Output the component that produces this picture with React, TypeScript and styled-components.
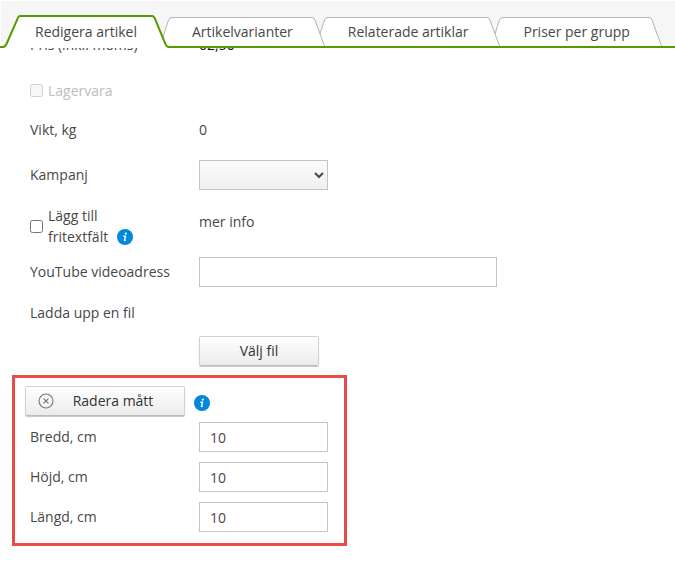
import React, { useState } from "react";
import styled, { createGlobalStyle, css } from "styled-components";

const GREEN = "#569a04";
const LINE = "#c4c4c4";
const TEXT = "#484848";

const GlobalStyle = createGlobalStyle`
  *, *::before, *::after { box-sizing: border-box; }
  body {
    margin: 0;
    background: #fff;
    color: ${TEXT};
    font: 14px/21px "Open Sans", "Noto Sans", sans-serif;
  }
  button, input, select { font: inherit; color: inherit; }
`;

const TabBar = styled.div`
  display: flex;
  align-items: flex-end;
  height: 48px;
  border-top: 1px solid #fff;
  border-left: 1px solid #fff;
  border-bottom: 2px solid ${GREEN};
  background: #f6f6f6;
`;

const TabButton = styled.button<{ $active: boolean; $order: number }>`
  display: flex;
  flex: none;
  align-items: flex-end;
  margin: 0 0 0 -9px;
  padding: 0;
  border: 0;
  background: none;
  white-space: nowrap;
  cursor: pointer;
  position: relative;
  z-index: ${(p) => (p.$active ? 10 : p.$order)};
  ${(p) =>
    p.$active &&
    css`
      margin-bottom: -2px;
    `}
  &:first-child {
    margin-left: -1px;
  }
`;

const TabLabel = styled.span<{ $active: boolean }>`
  display: block;
  height: ${(p) => (p.$active ? 33 : 29)}px;
  padding: ${(p) => (p.$active ? "4px 15px 0" : "3px 19px 0 20px")};
  border-top: ${(p) => (p.$active ? `2px solid ${GREEN}` : "1px solid #b3b3b3")};
  background: #fff;
`;

const TabEdge = styled.svg`
  display: block;
  flex: none;
`;

const Panel = styled.main`
  overflow: hidden;
`;

const Form = styled.form`
  margin-top: -28px;
  padding: 0 12px 30px;
`;

const Row = styled.div<{ $size?: "normal" | "tall" | "taller" | "compact" }>`
  display: grid;
  grid-template-columns: 169px minmax(0, 1fr);
  align-items: center;
  min-height: ${(p) => ({ normal: 40, tall: 50, taller: 52, compact: 30 })[p.$size ?? "normal"]}px;
  padding-left: 18px;
`;

const Caption = styled.span`
  padding-bottom: 2px;
`;

const CheckLabel = styled.label<{ $disabled?: boolean }>`
  display: flex;
  align-items: center;
  gap: 5px;
  color: ${(p) => (p.$disabled ? "#bdbdbd" : "inherit")};
`;

const CheckBox = styled.input`
  flex: none;
  width: 13px;
  height: 13px;
  margin: 0;
`;

const CheckText = styled.span`
  width: 90px;
`;

const Price = styled(Caption)`
  color: #111;
`;

const MoreInfo = styled.span`
  padding-bottom: 10px;
`;

const DropDown = styled.select`
  width: 129px;
  height: 30px;
  padding: 0 0 0 6px;
  border: 1px solid ${LINE};
  border-radius: 0;
  background: linear-gradient(#fbfbfb, #f0f0f0);
`;

const TextBox = styled.input<{ $wide?: boolean }>`
  width: ${(p) => (p.$wide ? 298 : 129)}px;
  max-width: 100%;
  height: 30px;
  padding: 0 10px;
  border: 1px solid ${LINE};
  border-radius: 0;
  background: #fff;
`;

const PushButton = styled.button<{ $wide?: boolean }>`
  display: flex;
  align-items: center;
  justify-content: center;
  width: ${(p) => (p.$wide ? 160 : 120)}px;
  height: 30px;
  padding: 0;
  border: 1px solid #d2d2d2;
  border-bottom-color: #bcbcbc;
  border-radius: 2px;
  background: linear-gradient(#fff, #ebebeb);
  box-shadow: 0 1px 1px #c6c6c6;
  color: #333;
  cursor: pointer;
`;

const ButtonText = styled.span`
  padding: 0 19px 2px;
`;

const Upload = styled.div`
  display: flex;
  margin: 4px 0 9px 187px;
`;

const Measures = styled.section`
  width: 335px;
  max-width: 100%;
  padding: 8px 10px 11px;
  border: 3px solid #e94b47;
`;

const MeasureHead = styled.div`
  display: flex;
  align-items: center;
  gap: 9px;
  margin-bottom: 6px;
`;

const MeasureRows = styled.div`
  display: grid;
  gap: 10px;
  margin-left: -13px;
`;

const InfoLink = styled.button`
  display: inline-flex;
  padding: 0;
  border: 0;
  background: none;
  vertical-align: -3px;
  cursor: pointer;
`;

const LabelInfo = styled.span`
  margin-left: 9px;
`;

const HeadInfo = styled.span`
  display: flex;
  padding-top: 4px;
`;

function Info() {
  return (
    <InfoLink type="button" aria-label="Information">
      <svg width="16" height="16" viewBox="0 0 16 16" aria-hidden="true">
        <circle cx="8" cy="8" r="8" fill="#0088dc" />
        <circle cx="8.8" cy="4.6" r="1.15" fill="#fff" />
        <path
          d="M6.3 7.2H8.6L7.5 11.2Q7.4 11.8 8.7 11.1"
          fill="none"
          stroke="#fff"
          strokeWidth="1.4"
          strokeLinejoin="round"
        />
      </svg>
    </InfoLink>
  );
}

function RemoveIcon() {
  return (
    <svg width="16" height="16" viewBox="0 0 16 16" fill="none" stroke="#777" aria-hidden="true">
      <circle cx="8" cy="8" r="7" strokeWidth="1.1" />
      <path d="M5.6 5.6L10.4 10.4M10.4 5.6L5.6 10.4" strokeWidth="1.2" />
    </svg>
  );
}

interface TabProps {
  name: string;
  active: boolean;
  order: number;
  onSelect: () => void;
}

function Tab({ name, active, order, onSelect }: TabProps) {
  return (
    <TabButton type="button" role="tab" aria-selected={active} $active={active} $order={order} onClick={onSelect}>
      {active ? (
        <TabEdge width="20" height="33" viewBox="0 0 20 33">
          <path d="M3 33Q5 31 7 29L17 4Q18 1 20 1V33Z" fill="#fff" />
          <path d="M0 32H3Q5 32 6.500 29L17.500 4Q18.500 1 20 1" fill="none" stroke={GREEN} strokeWidth="2" />
        </TabEdge>
      ) : (
        <TabEdge width="12" height="29" viewBox="0 0 12 29">
          <path d="M0 29L8.500 3Q9.500 0.500 12 0.500V29Z" fill="#fff" />
          <path d="M0 29L8.500 3Q9.500 0.500 12 0.500" fill="none" stroke="#b3b3b3" />
        </TabEdge>
      )}
      <TabLabel $active={active}>{name}</TabLabel>
      {active ? (
        <TabEdge width="17" height="33" viewBox="0 0 17 33">
          <path d="M0 1Q2 1 3 4L13.500 29Q14.500 32 17 33H0Z" fill="#fff" />
          <path d="M0 1Q2 1 3 4L13.500 29Q14.500 32 17 32" fill="none" stroke={GREEN} strokeWidth="2" />
        </TabEdge>
      ) : (
        <TabEdge width="13" height="29" viewBox="0 0 13 29">
          <path d="M0 0.500Q2 0.500 3 3L11 25Q12 28 13 29H0Z" fill="#fff" />
          <path d="M0 0.500Q2 0.500 3 3L11 25Q12 28 13 29" fill="none" stroke="#b3b3b3" />
        </TabEdge>
      )}
    </TabButton>
  );
}

const tabs = ["Redigera artikel", "Artikelvarianter", "Relaterade artiklar", "Priser per grupp"];

const measures = [
  { id: "bredd", label: "Bredd, cm" },
  { id: "hojd", label: "Höjd, cm" },
  { id: "langd", label: "Längd, cm" },
];

export default function App() {
  const [selected, setSelected] = useState(0);
  return (
    <>
      <GlobalStyle />
      <TabBar role="tablist">
        {tabs.map((name, i) => (
          <Tab
            key={name}
            name={name}
            active={i === selected}
            order={tabs.length - i}
            onSelect={() => setSelected(i)}
          />
        ))}
      </TabBar>
      <Panel>
        <Form>
          <Row $size="tall">
            <Caption>Pris (inkl. moms)</Caption>
            <Price>62,50</Price>
          </Row>
          <Row>
            <CheckLabel $disabled>
              <CheckBox type="checkbox" disabled />
              Lagervara
            </CheckLabel>
          </Row>
          <Row>
            <Caption>Vikt, kg</Caption>
            <Caption>0</Caption>
          </Row>
          <Row $size="tall">
            <Caption as="label" htmlFor="kampanj">Kampanj</Caption>
            <DropDown id="kampanj" defaultValue="">
              <option value="" />
            </DropDown>
          </Row>
          <Row $size="taller">
            <CheckLabel>
              <CheckBox type="checkbox" />
              <CheckText>
                Lägg till fritextfält
                <LabelInfo>
                  <Info />
                </LabelInfo>
              </CheckText>
            </CheckLabel>
            <MoreInfo>mer info</MoreInfo>
          </Row>
          <Row>
            <Caption as="label" htmlFor="youtube">YouTube videoadress</Caption>
            <TextBox id="youtube" type="text" $wide />
          </Row>
          <Row>
            <span>Ladda upp en fil</span>
          </Row>
          <Upload>
            <PushButton type="button">
              <ButtonText>Välj fil</ButtonText>
            </PushButton>
          </Upload>
          <Measures>
            <MeasureHead>
              <PushButton type="button" $wide>
                <RemoveIcon />
                <ButtonText>Radera mått</ButtonText>
              </PushButton>
              <HeadInfo>
                <Info />
              </HeadInfo>
            </MeasureHead>
            <MeasureRows>
              {measures.map((m) => (
                <Row key={m.id} $size="compact">
                  <Caption as="label" htmlFor={m.id}>{m.label}</Caption>
                  <TextBox id={m.id} type="text" defaultValue="10" />
                </Row>
              ))}
            </MeasureRows>
          </Measures>
        </Form>
      </Panel>
    </>
  );
}
